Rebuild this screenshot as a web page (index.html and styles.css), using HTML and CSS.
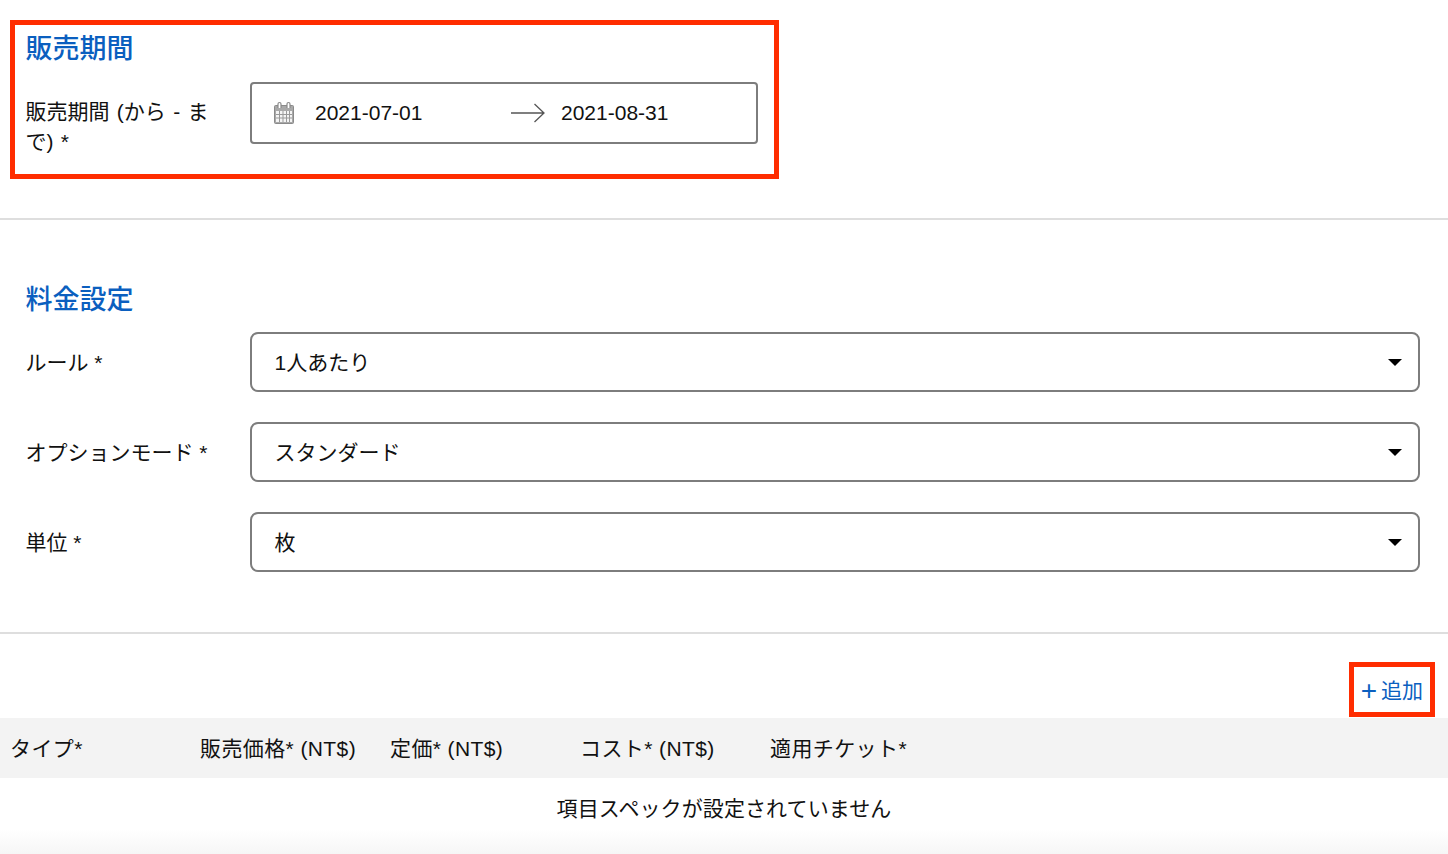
FILE: index.html
```html
<!DOCTYPE html>
<html lang="ja">
<head>
<meta charset="utf-8">
<title>販売期間</title>
<link rel="stylesheet" href="styles.css">
</head>
<body>
<main class="page">
  <section class="period">
    <div class="mark mark-period"></div>
    <h2 class="title">販売期間</h2>
    <div class="row row-period">
      <label class="label label-wrap">販売期間 (から - まで) *</label>
      <div class="range">
        <svg class="cal" width="22" height="24" viewBox="0 0 22 24" aria-hidden="true">
          <rect x="1.500" y="4.500" width="19" height="18" rx="1" fill="#a9a9a9" stroke="#8a8a8a"/>
          <rect x="3" y="10" width="16" height="11" fill="#f4f4f4"/>
          <path d="M6.500 10v11M10 10v11M13.500 10v11M16.500 10v11M3 13.500h16M3 17h16" stroke="#999" fill="none"/>
          <path d="M5 7V3a1.500 1.500 0 0 1 3 0v4M14 7V3a1.500 1.500 0 0 1 3 0v4" stroke="#8a8a8a" stroke-width="1.200" fill="#fff"/>
        </svg>
        <span class="date date-from">2021-07-01</span>
        <svg class="arrow" width="34" height="20" viewBox="0 0 34 20" aria-hidden="true">
          <path d="M0 10h32.500M23.500 1l9.500 9-9.500 9" stroke="#555" stroke-width="1.300" fill="none"/>
        </svg>
        <span class="date">2021-08-31</span>
      </div>
    </div>
  </section>

  <section class="pricing">
    <h2 class="title">料金設定</h2>
    <div class="row row-select">
      <label class="label">ルール *</label>
      <div class="select">1人あたり<span class="caret"></span></div>
    </div>
    <div class="row row-select">
      <label class="label">オプションモード *</label>
      <div class="select">スタンダード<span class="caret"></span></div>
    </div>
    <div class="row row-select">
      <label class="label">単位 *</label>
      <div class="select">枚<span class="caret"></span></div>
    </div>
  </section>

  <section class="specs">
    <div class="actions">
      <div class="mark mark-add"></div>
      <a class="add"><span class="plus">+</span>追加</a>
    </div>
    <div class="thead">
      <span>タイプ*</span>
      <span>販売価格* (NT$)</span>
      <span>定価* (NT$)</span>
      <span>コスト* (NT$)</span>
      <span>適用チケット*</span>
    </div>
    <div class="empty">項目スペックが設定されていません</div>
  </section>
</main>
</body>
</html>
```

FILE: styles.css
```css
* { box-sizing: border-box; }
html, body { margin: 0; height: 100%; background: #fff; overflow: hidden; }
body {
  font-family: "Liberation Sans", "Noto Sans CJK JP", sans-serif;
  font-size: 21px;
  line-height: 30px;
  color: #111;
}
.page { width: 1448px; height: 854px; display: flex; flex-direction: column; }

.period {
  position: relative;
  height: 220px;
  padding: 29px 28px 0 25.500px;
  border-bottom: 2px solid #dedede;
}
.pricing {
  height: 414px;
  padding: 65px 28px 0 25.500px;
  border-bottom: 2px solid #dedede;
}
.title {
  margin: 0 0 13px;
  font-size: 27px;
  line-height: 40px;
  font-weight: 500;
  color: #0b5fbf;
}
.pricing .title { margin-bottom: 17px; line-height: 30px; }
.row { display: flex; align-items: flex-start; }
.row-select { margin-bottom: 30px; }
.label { width: 224.500px; flex: none; padding-right: 14px; }
.row-period .label { padding-top: 15px; word-spacing: 1.500px; }
.row-select .label { padding-top: 16px; white-space: nowrap; }

.range {
  width: 508px;
  height: 62px;
  display: flex;
  align-items: center;
  padding-left: 21px;
  border: 2px solid #7d7d7d;
  border-radius: 4px;
}
.cal { flex: none; margin-right: 20px; }
.date { width: 107px; white-space: nowrap; }
.date-from { margin-right: 89px; }
.arrow { flex: none; margin-right: 16px; }

.select {
  flex: 1;
  height: 60px;
  display: flex;
  align-items: center;
  justify-content: space-between;
  padding: 1px 16px 0 22.500px;
  border: 2px solid #7d7d7d;
  border-radius: 8px;
}
.caret {
  width: 0;
  height: 0;
  border-left: 7px solid transparent;
  border-right: 7px solid transparent;
  border-top: 7px solid #000;
}

.specs { flex: 1; display: flex; flex-direction: column; background: linear-gradient(to bottom, #fff 0, #fff 195px, #f6f6f6 220px); }
.actions {
  position: relative;
  height: 84px;
  display: flex;
  justify-content: flex-end;
  align-items: flex-end;
  padding: 0 25px 12px 0;
}
.add { color: #0b5fbf; line-height: 30px; display: flex; align-items: center; }
.plus { font-size: 28px; margin-right: 4px; font-weight: 400; }

.thead {
  height: 60px;
  display: grid;
  grid-template-columns: 190px 190px 190px 190px 1fr;
  align-items: center;
  padding: 1px 0 0 10px;
  background: #f3f3f3;
  letter-spacing: 0.400px;
}
.empty { height: 60px; display: flex; align-items: center; justify-content: center; padding-top: 1px; letter-spacing: 0.100px; }

.mark { position: absolute; border: 5px solid #ff2d00; pointer-events: none; }
.mark-period { left: 10px; top: 20px; width: 769px; height: 159px; }
.mark-add { right: 13px; top: 28px; width: 86px; height: 55px; }
```
